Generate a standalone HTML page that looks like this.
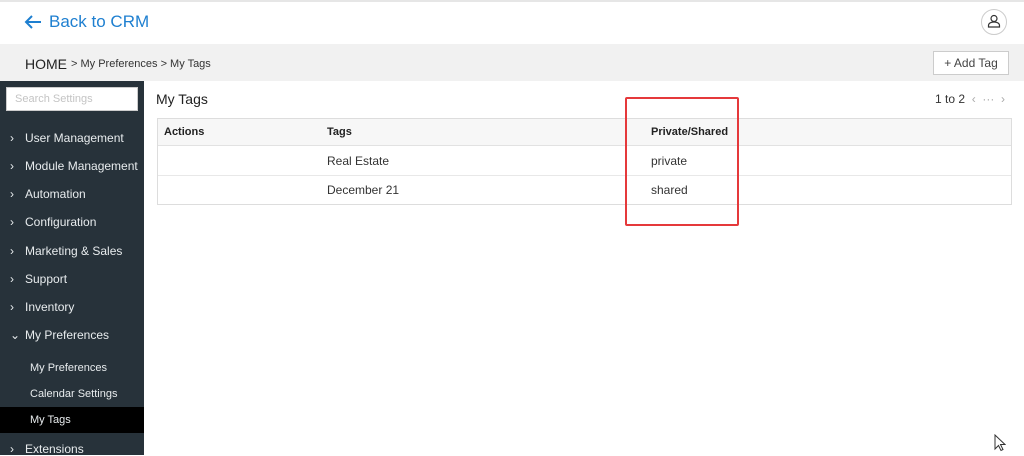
<!DOCTYPE html>
<html><head><style>
*{margin:0;padding:0;box-sizing:border-box}
body{width:1024px;height:455px;overflow:hidden;background:#fff;font-family:"Liberation Sans",sans-serif;position:relative;color:#333}
.a{position:absolute;white-space:nowrap}
.top{left:0;top:0;width:1024px;height:44px;border-top:2px solid #e6e6e6;background:#fff}
.bc{left:0;top:44px;width:1024px;height:37px;background:#f1f1f1}
.side{left:0;top:81px;width:144px;height:374px;background:#27323a}
.mi{color:#e8ecee;font-size:12px;left:10px}
.mi span{display:inline-block;width:15px}
.si{color:#e8ecee;font-size:11px;left:30px}
.th{font-size:11px;font-weight:bold;color:#222}
.td{font-size:12px;color:#333}
</style></head><body>
<div class="a top"></div>
<svg class="a" style="left:23px;top:14px" width="20" height="16" viewBox="0 0 20 16"><path d="M18 8H3M9 2L3 8l6 6" stroke="#1e7fd0" stroke-width="2" fill="none"/></svg>
<div class="a" style="left:49px;top:12px;font-size:17px;color:#1e7fd0">Back to CRM</div>
<div class="a" style="left:981px;top:9px;width:26px;height:26px;border:1px solid #ccc;border-radius:50%"></div>
<svg class="a" style="left:986px;top:13px" width="16" height="16" viewBox="0 0 16 16"><circle cx="8" cy="5.5" r="3" stroke="#333" fill="none" stroke-width="1.2"/><path d="M2.5 14v-1.5c0-2 2-3.5 5.5-3.5s5.5 1.5 5.5 3.5V14z" stroke="#333" fill="none" stroke-width="1.2"/></svg>
<div class="a bc"></div>
<div class="a" style="left:25px;top:56px;font-size:14px;color:#222">HOME</div>
<div class="a" style="left:71px;top:58px;font-size:11px;color:#333">&gt; My Preferences &gt; My Tags</div>
<div class="a" style="left:933px;top:51px;width:76px;height:24px;border:1px solid #ccc;background:#fff;font-size:12px;color:#444;text-align:center;line-height:22px">+ Add Tag</div>
<div class="a side"></div>
<div class="a" style="left:6px;top:87px;width:132px;height:24px;background:#fff;border:1px solid #ccc;font-size:11px;color:#c4c4c4;padding:5px 8px">Search Settings</div>
<div class="a mi" style="top:131px"><span>›</span>User Management</div>
<div class="a mi" style="top:159px"><span>›</span>Module Management</div>
<div class="a mi" style="top:187px"><span>›</span>Automation</div>
<div class="a mi" style="top:215px"><span>›</span>Configuration</div>
<div class="a mi" style="top:244px"><span>›</span>Marketing &amp; Sales</div>
<div class="a mi" style="top:272px"><span>›</span>Support</div>
<div class="a mi" style="top:300px"><span>›</span>Inventory</div>
<div class="a mi" style="top:328px"><span>⌄</span>My Preferences</div>
<div class="a si" style="top:362px">My Preferences</div>
<div class="a si" style="top:388px">Calendar Settings</div>
<div class="a" style="left:0;top:407px;width:144px;height:26px;background:#000"></div>
<div class="a si" style="top:414px">My Tags</div>
<div class="a mi" style="top:442px"><span>›</span>Extensions</div>
<div class="a" style="left:156px;top:91px;font-size:14px;color:#222">My Tags</div>
<div class="a" style="left:935px;top:92px;font-size:12px;color:#333">1 to 2 <span style="color:#aaa">&nbsp;‹ &nbsp;··· &nbsp;›</span></div>
<div class="a" style="left:157px;top:118px;width:855px;height:87px;border:1px solid #ddd"></div>
<div class="a" style="left:158px;top:119px;width:853px;height:27px;background:#f7f7f7;border-bottom:1px solid #e2e2e2"></div>
<div class="a" style="left:158px;top:175px;width:853px;height:1px;background:#e8e8e8"></div>
<div class="a th" style="left:164px;top:126px">Actions</div>
<div class="a th" style="left:327px;top:126px">Tags</div>
<div class="a th" style="left:651px;top:126px">Private/Shared</div>
<div class="a td" style="left:327px;top:154px">Real Estate</div>
<div class="a td" style="left:651px;top:154px">private</div>
<div class="a td" style="left:327px;top:183px">December 21</div>
<div class="a td" style="left:651px;top:183px">shared</div>
<div class="a" style="left:625px;top:97px;width:114px;height:129px;border:2px solid #e5393b;border-radius:2px"></div>
<svg class="a" style="left:994px;top:434px" width="12" height="18" viewBox="0 0 12 18"><path d="M1 1v14l3.5-3.5 2.5 5 2-1-2.5-5H11z" fill="#fff" stroke="#333"/></svg>
</body></html>
